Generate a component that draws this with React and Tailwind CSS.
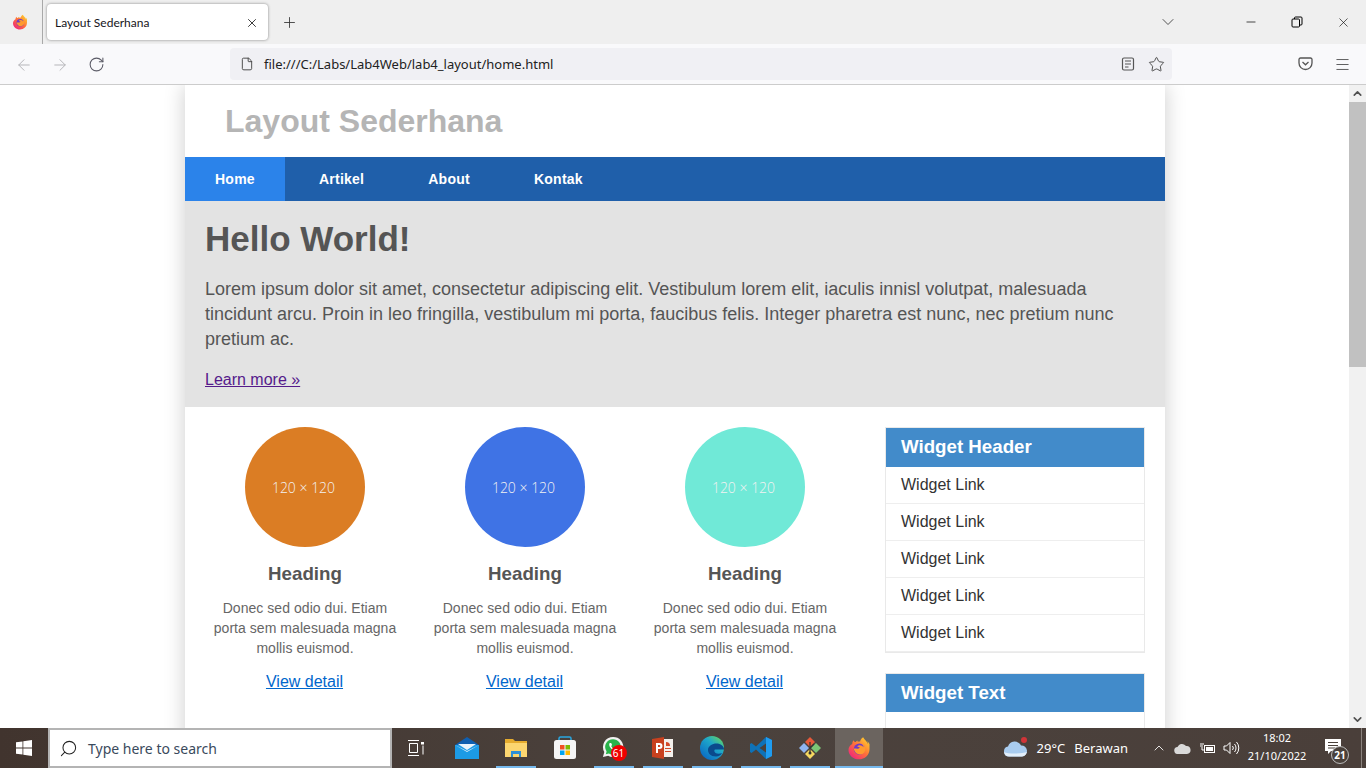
import { X, Plus, ArrowLeft, ArrowRight, RotateCw, File, ChevronDown, Minus, Star, Menu, ChevronUp, Search } from 'lucide-react';

const cards = [
  { color: 'bg-[#db7d24]' },
  { color: 'bg-[#3f73e5]' },
  { color: 'bg-[#70e9d7]' },
];

function FirefoxIcon({ size = 16 }) {
  return (
    <svg width={size} height={size} viewBox="0 0 32 32">
      <defs>
        <linearGradient id="ffa" x1="0.8" y1="0.1" x2="0.1" y2="0.9">
          <stop offset="0" stopColor="#ffc12e" />
          <stop offset="0.45" stopColor="#ff7139" />
          <stop offset="1" stopColor="#f0267a" />
        </linearGradient>
      </defs>
      <path d="M30 11c-.7-1.700-2-3.500-3-4 .8 1.600 1.300 3.200 1.400 4.300C26.700 7 23.800 5.300 21.500 1.500c-2.800 1.800-3.800 4.200-4 5.800-1-.1-2-.1-3 .3-.3-.5-.5-1-.6-1.700-1 .5-1.800 1.300-2.400 2.200-.9-.2-2.200-.9-2.800-2.600C7.500 7 7 8.800 7 10.500 4 12 2 15 2 18.500 2 25.700 8.300 31 16 31s14-6 14-13.500c0-2.200 0-4.500 0-6.500z" fill="url(#ffa)" />
      <circle cx="16.500" cy="17.500" r="7.500" fill="#6e3bc9" />
      <path d="M9 17c1 5 5 8 9 7.500 4-.5 6.500-3.500 6.500-7 0-3.500-2-6-4.500-7 1.500 1.500 2 3 2 4.500-1-1.800-3-3-5.500-2.800-1.500.2-2.500 1-3 1.800 1 .5 2.500.5 3.500 1-.5 1.500-2 2-3.500 2C12 17 10.500 16.500 9 17z" fill="#ff9a2e" />
    </svg>
  );
}

function TabStrip() {
  return (
    <div className="h-[44px] bg-[#efefef] flex items-stretch shrink-0">
      <div className="w-[43px] pr-[3px] flex items-center justify-center border-r border-[#a9a9a9]">
        <FirefoxIcon />
      </div>
      <div className="w-[221px] h-[36px] mt-[4px] ml-[4px] bg-white rounded-[4px] shadow-[0_0_3px_rgba(0,0,0,0.45)] flex items-center justify-between pl-[8px] pr-[9px]">
        <span className="mt-[1px] text-[12px] text-[#15141a] font-['Lato',sans-serif]">Layout Sederhana</span>
        <X size={14} strokeWidth={1.5} className="text-[#222] mt-[1px]" />
      </div>
      <div className="ml-[13px] flex items-center">
        <Plus size={17} strokeWidth={1.2} className="text-[#333] mt-[1px]" />
      </div>
      <div className="ml-auto flex items-center">
        <ChevronDown size={20} strokeWidth={1.1} className="text-[#444] mr-[66px]" />
        <Minus size={14} strokeWidth={1.2} className="text-black mr-[33px]" />
        <svg width="12" height="12" viewBox="0 0 12 12" fill="none" stroke="#000" className="mr-[33px]">
          <rect x="1" y="3" width="7.500" height="8" rx="1" />
          <path d="M3.500 3V2a1 1 0 0 1 1-1H10a1 1 0 0 1 1 1v6a1 1 0 0 1-1 1H8.500" />
        </svg>
        <X size={15} strokeWidth={1} className="text-black mr-[15px]" />
      </div>
    </div>
  );
}

function Toolbar() {
  return (
    <div className="h-[41px] bg-[#f9f9fb] border-b border-[#cccccc] flex items-center shrink-0 relative">
      <ArrowLeft size={18} strokeWidth={1.300} className="text-[#b4b4b8] ml-[15px] mt-[1px]" />
      <ArrowRight size={18} strokeWidth={1.300} className="text-[#b4b4b8] ml-[18px] mt-[1px]" />
      <RotateCw size={17} strokeWidth={1.500} className="text-[#5b5b66] ml-[19px] mt-[1px]" />
      <div className="ml-[125px] w-[942px] h-[32px] bg-[#f0f0f4] rounded-[4px] flex items-center pl-[10px] pr-[7px]">
        <File size={14} strokeWidth={1.600} className="text-[#444]" />
        <span className="ml-[10px] mt-[2px] text-[13px] text-[#222] font-['Noto_Sans',sans-serif]">file:///C:/Labs/Lab4Web/lab4_layout/home.html</span>
        <svg width="14" height="14" viewBox="0 0 14 14" fill="none" stroke="#555" strokeWidth="1.200" className="ml-auto mr-[13px]">
          <rect x="1.500" y="1" width="11" height="12" rx="1.500" />
          <path d="M4 4h6M4 7h6M4 10h3.500" />
        </svg>
        <Star size={17} strokeWidth={1.300} className="text-[#444]" />
      </div>
      <svg width="15" height="14" viewBox="0 0 15 14" fill="none" stroke="#555" strokeWidth="1.300" className="ml-auto mr-[21px]">
        <path d="M1 2.500A1.500 1.500 0 0 1 2.500 1h10A1.500 1.500 0 0 1 14 2.500V6a6.500 6.500 0 0 1-13 0z" />
        <path d="M4.500 5l3 2.800 3-2.800" />
      </svg>
      <Menu size={17} strokeWidth={1.200} className="text-[#444] mr-[15px]" />
    </div>
  );
}

function Card({ color }) {
  return (
    <div className="w-[220px] flex flex-col items-center text-center">
      <div className={`w-[120px] h-[120px] rounded-full flex items-center justify-center ${color}`}>
        <span className="mr-[3px] font-['Open_Sans',sans-serif] font-light text-[14px] text-[#f2f2f2]">120 × 120</span>
      </div>
      <h3 className="mt-[15px] text-[18.72px] leading-[23px] font-bold text-[#555]">Heading</h3>
      <p className="mt-[13px] px-[15px] text-[14px] leading-[20px] tracking-[0.05px] text-[#666]">
        Donec sed odio dui. Etiam porta sem malesuada magna mollis euismod.
      </p>
      <a href="#" className="mt-[15px] mr-[1px] text-[16px] leading-[18px] text-[#0066cc] underline">View detail</a>
    </div>
  );
}

function Widget({ title, head, children }) {
  return (
    <div className="border border-[#e9e9e9]">
      <div className={`${head} bg-[#428bca] pl-[15px] flex items-center text-[18.72px] font-bold text-white`}>{title}</div>
      {children}
    </div>
  );
}

function Page() {
  return (
    <div className="w-[980px] ml-[185px] bg-white shadow-[0_0_20px_rgba(0,0,0,0.2)] font-['Liberation_Sans',sans-serif]">
      <div className="h-[72px] pl-[40px] flex items-center">
        <h1 className="text-[32px] font-bold text-[#b5b5b5]">Layout Sederhana</h1>
      </div>
      <nav className="h-[44px] bg-[#1f5faa] flex text-[14px] font-bold tracking-[0.25px] text-white">
        <a href="#" className="px-[30px] flex items-center bg-[#2b83ea]">Home</a>
        <a href="#" className="ml-[4px] px-[30px] flex items-center">Artikel</a>
        <a href="#" className="ml-[4px] px-[30px] flex items-center">About</a>
        <a href="#" className="ml-[4px] px-[30px] flex items-center">Kontak</a>
      </nav>
      <section className="h-[206px] bg-[#e3e3e3] px-[20px] pt-[17px] text-[#555]">
        <h2 className="text-[35px] leading-[41px] font-bold">Hello World!</h2>
        <p className="mt-[18px] text-[18px] leading-[25px]">
          Lorem ipsum dolor sit amet, consectetur adipiscing elit. Vestibulum lorem elit, iaculis innisl volutpat, malesuada tincidunt arcu. Proin in leo fringilla, vestibulum mi porta, faucibus felis. Integer pharetra est nunc, nec pretium nunc pretium ac.
        </p>
        <a href="#" className="block mt-[19px] text-[16px] leading-[18px] text-[#551a8b] underline">Learn more »</a>
      </section>
      <div className="flex pt-[20px] pl-[10px] pb-[40px]">
        <div className="flex">
          {cards.map((c, i) => <Card key={i} color={c.color} />)}
        </div>
        <aside className="w-[260px] ml-[30px] flex flex-col gap-[20px]">
          <Widget title="Widget Header" head="h-[39px]">
            {[0, 1, 2, 3, 4].map((i) => (
              <div key={i} className="h-[37px] pl-[15px] flex items-center text-[16px] text-[#333] border-b border-[#eeeeee]">Widget Link</div>
            ))}
          </Widget>
          <Widget title="Widget Text" head="h-[38px] pt-[1px]">
            <div className="h-[120px]" />
          </Widget>
        </aside>
      </div>
    </div>
  );
}

function Scrollbar() {
  return (
    <div className="w-[17px] bg-[#f1f1f1] flex flex-col shrink-0">
      <div className="h-[17px] flex items-center justify-center">
        <ChevronUp size={13} strokeWidth={3} className="text-[#505050]" />
      </div>
      <div className="h-[265px] bg-[#c1c1c1]" />
      <div className="mt-auto h-[17px] flex items-center justify-center">
        <ChevronDown size={13} strokeWidth={3} className="text-[#505050]" />
      </div>
    </div>
  );
}

function MailIcon() {
  return (
    <svg width="24" height="24" viewBox="0 0 24 24">
      <path d="M0 9 12 1l12 8v3H0z" fill="#0f5fb0" />
      <path d="M0 9h24v14H0z" fill="#1c9be6" />
      <path d="M0 9l12 7 12-7-12 6z" fill="#d8ecfa" />
      <path d="M3 8h18l-9 6z" fill="#e9f4fc" />
    </svg>
  );
}

function FolderIcon() {
  return (
    <svg width="22" height="20" viewBox="0 0 22 20">
      <path d="M0 1h8l2 2h12v16H0z" fill="#e6ac2e" />
      <path d="M0 5h22v14H0z" fill="#fcd670" />
      <path d="M6 13h10v6h-2v-3H8v3H6z" fill="#2c8fd8" />
    </svg>
  );
}

function StoreIcon() {
  return (
    <svg width="24" height="24" viewBox="0 0 24 24">
      <path d="M6 5V2.500A1.500 1.500 0 0 1 7.500 1h9A1.500 1.500 0 0 1 18 2.500V5" fill="none" stroke="#2aa6e0" strokeWidth="1.500" />
      <rect x="1" y="4" width="22" height="19" rx="2.500" fill="#f5f5f5" />
      <rect x="7" y="9" width="4.500" height="4.500" fill="#f25022" />
      <rect x="12.500" y="9" width="4.500" height="4.500" fill="#7fba00" />
      <rect x="7" y="14.500" width="4.500" height="4.500" fill="#00a4ef" />
      <rect x="12.500" y="14.500" width="4.500" height="4.500" fill="#ffb900" />
    </svg>
  );
}

function WhatsappIcon() {
  return (
    <div className="relative w-[24px] h-[24px]">
      <svg width="22" height="22" viewBox="0 0 24 24">
        <path d="M12 1a11 11 0 0 0-9.500 16.500L1 23l5.700-1.500A11 11 0 1 0 12 1z" fill="#f2f2f2" />
        <path d="M12 3.500a8.500 8.500 0 0 0-7 13.300L4.200 20l3.300-.8A8.500 8.500 0 1 0 12 3.500z" fill="#29b34a" />
        <path d="M8.500 7.500c-1 1-1 3 1 5.500s4.500 3.500 5.700 3c1-.5 1.500-1.500 1.300-2l-2-1-1 1c-1 0-3-2-3.500-3.200l1-1-1-2.300z" fill="#fff" />
      </svg>
      <span className="absolute left-[9px] top-[9px] w-[16px] h-[16px] rounded-full bg-[#f00000] text-white text-[10px] leading-[16px] text-center font-['Noto_Sans',sans-serif]">61</span>
    </div>
  );
}

function PowerpointIcon() {
  return (
    <svg width="24" height="24" viewBox="0 0 24 24">
      <path d="M8 3h14v18H8z" fill="#f4f0ec" />
      <path d="M15 6a4 4 0 0 1 4 4h-4z" fill="#d2492a" />
      <path d="M14 12h6v1h-6zM14 15h6v1h-6z" fill="#d2492a" />
      <path d="M1 3l12-2v22L1 21z" fill="#c8411f" />
      <path d="M5 7h3.500a2.500 2.500 0 0 1 0 6H7v4H5zM7 9v2h1.300a1 1 0 0 0 0-2z" fill="#fff" />
    </svg>
  );
}

function EdgeIcon() {
  return (
    <svg width="24" height="24" viewBox="0 0 24 24">
      <defs>
        <linearGradient id="edg" x1="0.9" y1="0.1" x2="0.2" y2="0.9">
          <stop offset="0" stopColor="#5ed06c" />
          <stop offset="0.4" stopColor="#1ea7c9" />
          <stop offset="1" stopColor="#0c6fc4" />
        </linearGradient>
      </defs>
      <circle cx="12" cy="12" r="12" fill="url(#edg)" />
      <path d="M24 13c0-3-3.500-5.500-7.500-5.500S8 10 8 14c0 3 2.500 6.500 8 6.500 3 0 5-1.500 6-3.500-2 1-5 1-6.500 0-1.500-1-1.500-3-.5-3.500H24z" fill="#0b4a8c" />
    </svg>
  );
}

function VscodeIcon() {
  return (
    <svg width="24" height="24" viewBox="0 0 24 24">
      <path d="M17 1l6 3v16l-6 3L7 13.500 2.500 17 1 16v-8l1.500-1L7 10.500z" fill="#0e72b8" />
      <path d="M17 1l6 3v16l-6 3z" fill="#1f9cf0" />
      <path d="M17 7.500 10.500 12l6.500 4.500z" fill="#4a413b" />
    </svg>
  );
}

function GitIcon() {
  return (
    <svg width="24" height="24" viewBox="0 0 24 24">
      <path d="M12 1l5 5-5 5-5-5z" fill="#e8593a" />
      <path d="M6 7l5 5-5 5-5-5z" fill="#8fb4f0" />
      <path d="M18 7l5 5-5 5-5-5z" fill="#7cc576" />
      <path d="M12 13l5 5-5 5-5-5z" fill="#f6d860" />
      <path d="M12 6v12M12 12l4-4" stroke="#333" strokeWidth="1.200" />
      <circle cx="12" cy="17" r="1.500" fill="#333" />
    </svg>
  );
}

const taskApps = [
  { name: 'mail', icon: <MailIcon /> },
  { name: 'files', icon: <FolderIcon />, under: true },
  { name: 'store', icon: <StoreIcon /> },
  { name: 'whatsapp', icon: <WhatsappIcon />, under: true },
  { name: 'powerpoint', icon: <PowerpointIcon />, under: true },
  { name: 'edge', icon: <EdgeIcon />, under: true },
  { name: 'vscode', icon: <VscodeIcon />, under: true },
  { name: 'git', icon: <GitIcon />, under: true },
];

function Taskbar() {
  return (
    <div className="h-[40px] shrink-0 flex items-stretch bg-gradient-to-r from-[#41342e] via-[#4b423d] to-[#4a3f3a] text-white font-['Noto_Sans',sans-serif]">
      <div className="w-[48px] flex items-center justify-center">
        <svg width="16" height="16" viewBox="0 0 16 16" fill="#fff">
          <path d="M0 2.300 6.500 1.400v6.200H0zM7.300 1.300 16 0v7.600H7.300zM0 8.400h6.500v6.200L0 13.700zM7.300 8.400H16V16l-8.700-1.300z" />
        </svg>
      </div>
      <div className="w-[344px] bg-white border-2 border-[#b4b4b4] flex items-center pl-[9px]">
        <Search size={19} strokeWidth={1.300} className="text-[#222] -scale-x-100" />
        <span className="ml-[10px] text-[14px] text-[#3a4a5c]">Type here to search</span>
      </div>
      <div className="w-[49px] flex items-center justify-center">
        <svg width="17" height="16" viewBox="0 0 17 16" fill="none" stroke="#fff">
          <path d="M0 .5h11M0 15.500h11M1.500 3.500h8v9h-8zM15 5.500v9" />
          <rect x="13" y="2" width="3" height="2.500" fill="#fff" stroke="none" />
        </svg>
      </div>
      <div className="flex ml-[1px]">
        {taskApps.map((a) => (
          <div key={a.name} className="w-[49px] flex items-center justify-center relative">
            {a.icon}
            {a.under && <span className="absolute bottom-0 left-[5px] right-[4px] h-[2px] bg-[#76b9ed]" />}
          </div>
        ))}
        <div className="w-[48px] ml-[1px] bg-[#6b645f] flex items-center justify-center relative">
          <FirefoxIcon size={24} />
          <span className="absolute bottom-0 left-0 right-0 h-[2px] bg-[#76b9ed]" />
        </div>
      </div>
      <div className="ml-auto flex items-center">
        <div className="relative mr-[9px]">
          <svg width="25" height="17" viewBox="0 0 25 17">
            <path d="M6 16.500a5 5 0 0 1-1-9.900A7 7 0 0 1 18 5.500a5.500 5.500 0 0 1 1 11z" fill="#a9ccef" />
            <path d="M1 12c4 2 18 2 23 0-1 3-3 4.500-5 4.500H6C3.500 16.500 1.500 15 1 12z" fill="#e3effa" />
          </svg>
          <span className="absolute right-[1px] -top-[3px] w-[6px] h-[6px] rounded-full bg-[#d13438]" />
        </div>
        <span className="text-[13px] mt-[2px]">29°C</span>
        <span className="text-[13px] ml-[9px] mt-[2px]">Berawan</span>
        <ChevronUp size={16} strokeWidth={1.300} className="ml-[23px]" />
        <svg width="17" height="11" viewBox="0 0 17 11" className="ml-[7px]">
          <path d="M4 11a3.500 3.500 0 0 1-.5-7A5 5 0 0 1 12 3a4 4 0 0 1 1 8z" fill="#d9d9d9" />
        </svg>
        <svg width="17" height="12" viewBox="0 0 17 12" fill="none" stroke="#fff" className="ml-[8px]">
          <rect x="5.500" y="3.500" width="10" height="7" />
          <rect x="7" y="5" width="7" height="4" fill="#fff" stroke="none" />
          <path d="M1 4h3M2 1v2M4 1v2M3 5v3h3" />
        </svg>
        <svg width="17" height="14" viewBox="0 0 17 14" fill="none" stroke="#fff" className="ml-[7px]">
          <path d="M1 5h2.500L7 1.500v11L3.500 9H1z" />
          <path d="M9.500 5a3 3 0 0 1 0 4M11.500 3a6 6 0 0 1 0 8M13.500 1a9 9 0 0 1 0 12" />
        </svg>
        <div className="ml-[2px] -mt-[2px] w-[70px] flex flex-col items-center text-[11px] leading-[18px]">
          <span>18:02</span>
          <span>21/10/2022</span>
        </div>
        <div className="relative w-[42px] ml-[7px] h-[40px] flex items-center justify-center">
          <svg width="16" height="15" viewBox="0 0 16 15" fill="#fff" className="-mt-[3px] -ml-[14px]">
            <path d="M0 0h16v12H6l-3 3v-3H0z" />
            <path d="M3 3.500h10M3 6.500h10M3 9h7" stroke="#4a413b" />
          </svg>
          <span className="absolute right-[12px] bottom-[4px] w-[18px] h-[18px] rounded-full bg-[#4a413b] border border-[#bbb] text-[10px] leading-[16px] text-center font-bold">21</span>
        </div>
        <div className="w-[1px] h-full bg-[#8a827d] mr-[4px]" />
      </div>
    </div>
  );
}

export default function App() {
  return (
    <div className="h-screen flex flex-col overflow-hidden bg-white font-['Noto_Sans',sans-serif]">
      <TabStrip />
      <Toolbar />
      <div className="flex-1 min-h-0 flex">
        <main className="flex-1 min-w-0 overflow-hidden">
          <Page />
        </main>
        <Scrollbar />
      </div>
      <Taskbar />
    </div>
  );
}
